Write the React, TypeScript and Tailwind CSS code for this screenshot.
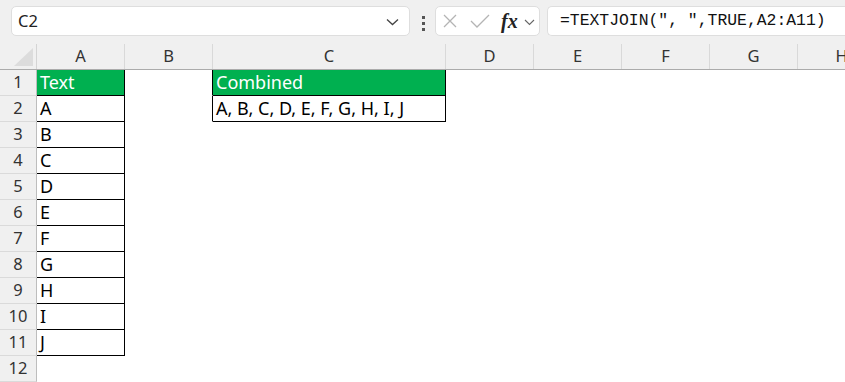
import React from "react";

const cols = [
  { key: "A", w: "w-[88px]" },
  { key: "B", w: "w-[88px]" },
  { key: "C", w: "w-[233px]" },
  { key: "D", w: "w-[88px]" },
  { key: "E", w: "w-[88px]" },
  { key: "F", w: "w-[88px]" },
  { key: "G", w: "w-[88px]" },
  { key: "H", w: "w-[88px]" },
];

const letters = ["A", "B", "C", "D", "E", "F", "G", "H", "I", "J"];

function cellFor(row: number, col: string) {
  // content of the few filled cells
  if (col === "A") {
    if (row === 1) return { text: "Text", head: true };
    if (row <= 11) return { text: letters[row - 2], head: false };
  }
  if (col === "C") {
    if (row === 1) return { text: "Combined", head: true };
    if (row === 2) return { text: "A, B, C, D, E, F, G, H, I, J", head: false };
  }
  return null;
}

function Toolbar() {
  return (
    <div className="flex h-[44px] items-start bg-[#f0f0f0] pt-[6px]">
      <div className="ml-[11px] flex h-[30px] w-[399px] items-center justify-between rounded-[5px] border border-[#dedede] bg-white pl-[6px] pr-[10px]">
        <span className="text-[16.5px] text-[#222]">C2</span>
        <svg width="13" height="8" viewBox="0 0 13 8" className="mt-[2px]">
          <path d="M1 1.5 L6.5 6.5 L12 1.5" fill="none" stroke="#444" strokeWidth="1.3" />
        </svg>
      </div>
      <div className="ml-[12px] mt-[10px] flex flex-col gap-[3px]">
        <span className="h-[3px] w-[3px] bg-[#555]" />
        <span className="h-[3px] w-[3px] bg-[#555]" />
        <span className="h-[3px] w-[3px] bg-[#555]" />
      </div>
      <div className="ml-[10px] flex h-[30px] w-[105px] items-center rounded-[5px] border border-[#dedede] bg-white">
        <svg width="14" height="14" viewBox="0 0 14 14" className="ml-[7px]">
          <path d="M1 1 L13 13 M13 1 L1 13" stroke="#b4b4b4" strokeWidth="1.3" />
        </svg>
        <svg width="20" height="14" viewBox="0 0 20 14" className="ml-[13px]">
          <path d="M1 7 L7 13 L19 1" fill="none" stroke="#b4b4b4" strokeWidth="1.3" />
        </svg>
        <span className="ml-[11px] font-['Liberation_Serif',serif] text-[20px] font-semibold italic leading-none text-[#222]">
          fx
        </span>
        <svg width="11" height="7" viewBox="0 0 11 7" className="ml-[6px] mt-[2px]">
          <path d="M1 1 L5.5 5.5 L10 1" fill="none" stroke="#666" strokeWidth="1.1" />
        </svg>
      </div>
      <div className="ml-[7px] flex h-[30px] flex-1 items-center rounded-l-[5px] border border-r-0 border-[#dedede] bg-white pl-[12px]">
        <span className="font-['Liberation_Mono',monospace] text-[16.4px] whitespace-nowrap text-[#111]">
          =TEXTJOIN(", ",TRUE,A2:A11)
        </span>
      </div>
    </div>
  );
}

function HeaderRow() {
  return (
    <div className="flex h-[26px] border-b border-[#ababab] bg-[#f0f0f0]">
      <div className="relative w-[37px] shrink-0 border-r border-[#d4d4d4]">
        <svg width="19" height="18" viewBox="0 0 19 18" className="absolute bottom-[3px] right-[3px]">
          <path d="M19 0 L19 18 L0 18 Z" fill="#dcdcdc" />
        </svg>
      </div>
      {cols.map((c) => (
        <div
          key={c.key}
          className={`${c.w} flex shrink-0 items-center justify-center border-r border-[#d9d9d9] text-[16.5px] text-[#333]`}
        >
          {c.key}
        </div>
      ))}
    </div>
  );
}

function Row({ n }: { n: number }) {
  return (
    <div className="flex h-[26px]">
      <div className="flex w-[37px] shrink-0 items-center justify-center border-r border-b border-r-[#bdbdbd] border-b-[#dadada] bg-[#f0f0f0] text-[16.5px] text-[#333]">
        {n}
      </div>
      {cols.map((c, i) => {
        const cell = cellFor(n, c.key);
        const next = i + 1 < cols.length ? cellFor(n, cols[i + 1].key) : null;
        const rightBlack = !!cell || !!next;
        return (
          <div
            key={c.key}
            className={`${c.w} flex shrink-0 items-center overflow-hidden whitespace-nowrap border-r border-b pl-[3px] text-[18px] ${
              rightBlack ? "border-r-black" : "border-r-white"
            } ${cell ? "border-b-black" : "border-b-white"} ${
              cell?.head ? "bg-[#00b050] text-white" : "bg-white text-black"
            }`}
          >
            {cell?.text}
          </div>
        );
      })}
    </div>
  );
}

export default function App() {
  const rows = Array.from({ length: 12 }, (_, i) => i + 1);
  return (
    <div className="h-[382px] w-[845px] overflow-hidden bg-white font-['Noto_Sans',sans-serif]">
      <Toolbar />
      <HeaderRow />
      {rows.map((n) => (
        <Row key={n} n={n} />
      ))}
    </div>
  );
}
